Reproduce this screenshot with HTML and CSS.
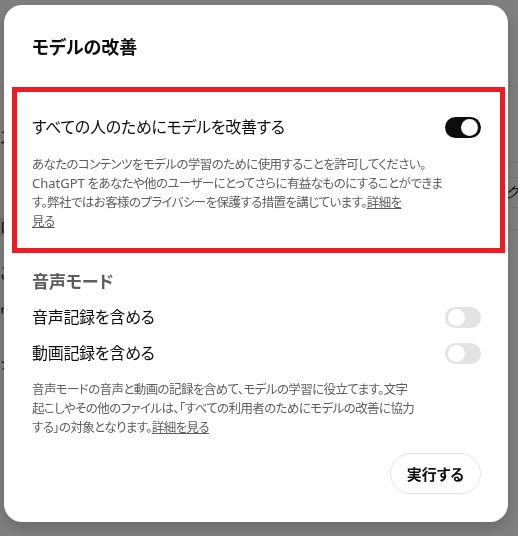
FILE: index.html
```html
<!DOCTYPE html>
<html lang="ja">
<head>
  <meta charset="UTF-8">
  <meta name="viewport" content="width=device-width, initial-scale=1.0">
  <title>モデルの改善</title>
  <link rel="stylesheet" href="styles.css">
</head>
<body>
  <div class="page">
    <div class="page-header"></div>
    <div class="page-body">
      <div class="page-left">
        <span class="ghost g1">ス</span>
        <span class="ghost g2 band">ロ</span>
        <span class="ghost g3">こ</span>
        <span class="ghost g4">ワ</span>
        <span class="ghost g5">ジ</span>
      </div>
      <div class="page-right">
        <div class="ghost-line l1"></div>
        <div class="ghost-line l2"></div>
        <div class="ghost-text">ク</div>
        <div class="ghost-line l3"></div>
        <div class="ghost-line l4"></div>
      </div>
    </div>
  </div>

  <div class="overlay">
    <div class="modal">
      <header class="modal-header">
        <h2>モデルの改善</h2>
      </header>

      <section class="section-highlight">
        <div class="setting-row">
          <span class="label">すべての人のためにモデルを改善する</span>
          <span class="toggle on"></span>
        </div>
        <p class="desc">あなたのコンテンツをモデルの学習のために使用することを許可してください。<br><span class="latin">ChatGPT</span> をあなたや他のユーザーにとってさらに有益なものにすることができま<br>す。弊社ではお客様のプライバシーを保護する措置を講じています。<a href="#">詳細を<br>見る</a></p>
      </section>

      <section class="voice-section">
        <h3>音声モード</h3>
        <div class="setting-row tall">
          <span class="label">音声記録を含める</span>
          <span class="toggle"></span>
        </div>
        <div class="setting-row tall">
          <span class="label">動画記録を含める</span>
          <span class="toggle"></span>
        </div>
        <p class="desc">音声モードの音声と動画の記録を含めて、モデルの学習に役立てます。文字<br>起こしやその他のファイルは、「すべての利用者のためにモデルの改善に協力<br>する」の対象となります。<a href="#">詳細を見る</a></p>
      </section>

      <div class="modal-footer">
        <button class="btn">実行する</button>
      </div>
    </div>
  </div>
</body>
</html>
```

FILE: styles.css
```css
* { box-sizing: border-box; margin: 0; padding: 0; }
body {
  font-family: "Noto Sans", "Noto Sans CJK JP", sans-serif;
  font-feature-settings: "palt";
  background-color: #fff;
  color: #0d0d0d;
  width: 518px;
  height: 536px;
  overflow: hidden;
}

/* page behind the dialog */
.page { height: 100%; }
.page-header {
  height: 87px;
  border-bottom: 1px solid #ececec;
}
.page-body {
  display: flex;
  justify-content: space-between;
}
.page-left {
  display: flex;
  flex-direction: column;
  width: 20px;
  font-size: 16px;
  color: #222;
}
.ghost { display: block; line-height: 20px; }
.g1 { margin-top: 40px; }
.g2 { margin-top: 70px; }
.band { background-color: #e6e6e6; }
.g3 { margin-top: 26px; }
.g4 { margin-top: 20px; }
.g5 { margin-top: 30px; }
.page-right {
  width: 14px;
  display: flex;
  flex-direction: column;
}
.ghost-line { height: 1px; background-color: #e8e8e8; }
.l1 { margin-top: 75px; }
.l2 { margin-top: 14px; }
.ghost-text {
  font-size: 15px;
  font-style: italic;
  line-height: 20px;
  margin-top: 4px;
  margin-left: 1px;
}
.l3 { margin-top: 5px; }
.l4 { margin-top: 21px; }

.overlay {
  position: fixed;
  inset: 0;
  background-color: rgba(0, 0, 0, 0.5);
}
.modal {
  position: absolute;
  left: 4px;
  top: 5px;
  width: 504px;
  background-color: #fff;
  border-radius: 18px;
  padding: 0 27px 28px 28px;
  box-shadow: 0 6px 14px rgba(0, 0, 0, 0.18);
}
.modal-header { padding: 30px 0 28px; }
.modal-header h2 {
  font-size: 18px;
  line-height: 24px;
  font-weight: 600;
}

/* red annotation box */
.section-highlight {
  border: 5px solid #ed1c24;
  margin: 0 -24px 0 -20px;
  padding: 23px 19px 17px 15px;
}
.setting-row {
  display: flex;
  justify-content: space-between;
  align-items: center;
  height: 24px;
}
.setting-row.tall { height: 36px; }
.label {
  font-size: 16px;
  line-height: 24px;
  letter-spacing: -0.3px;
}
.toggle {
  position: relative;
  flex-shrink: 0;
  width: 36px;
  height: 21px;
  border-radius: 11px;
  background-color: #e3e3e3;
}
.toggle::after {
  content: "";
  position: absolute;
  top: 2px;
  left: 3px;
  width: 17px;
  height: 17px;
  border-radius: 50%;
  background-color: #fff;
}
.toggle.on { background-color: #0d0d0d; }
.toggle.on::after { left: auto; right: 3px; }

.desc {
  font-size: 12.5px;
  line-height: 19px;
  letter-spacing: -0.6px;
  color: #5d5d5d;
  max-width: 430px;
  margin-top: 16px;
}
.desc .latin { letter-spacing: 0; font-size: 13px; }
.desc a { color: inherit; text-decoration: underline; }

.voice-section { padding-top: 17px; }
.voice-section h3 {
  font-size: 17px;
  line-height: 24px;
  font-weight: 600;
  color: #5d5d5d;
  margin-bottom: 5px;
}
.voice-section .desc { margin-top: 9px; }

.modal-footer {
  display: flex;
  justify-content: flex-end;
  margin-top: 16px;
}
.btn {
  height: 41px;
  padding: 0 16px;
  border-radius: 999px;
  border: 1px solid #e3e3e3;
  background-color: #fff;
  font-family: inherit;
  font-feature-settings: "palt";
  font-size: 15px;
  font-weight: 600;
  color: #0d0d0d;
}
```
